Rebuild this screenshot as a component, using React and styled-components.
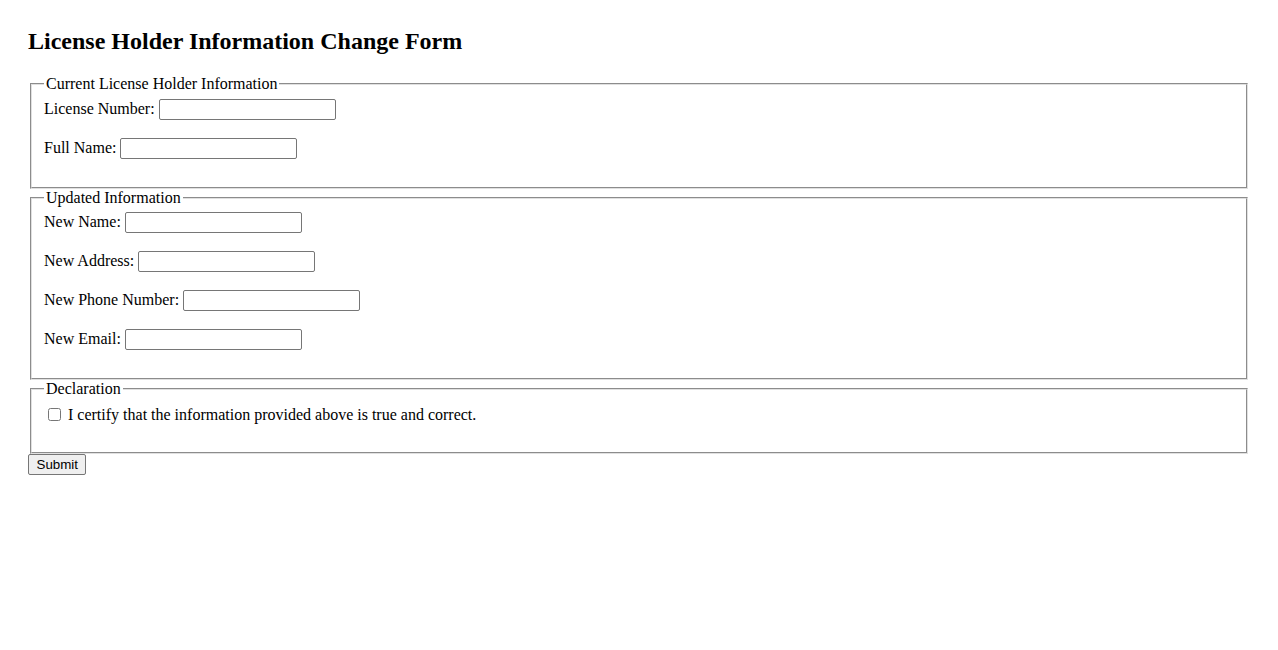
import styled, { createGlobalStyle } from 'styled-components';

const GlobalStyle = createGlobalStyle`
  body {
    margin: 0;
    background: #fff;
    color: #000;
    font-family: "Liberation Serif", "Times New Roman", serif;
    font-size: 16px;
  }
`;

const Page = styled.div`
  padding: 28px;
`;

const Title = styled.h2`
  margin: 0 0 20px;
  font-size: 24px;
  font-weight: bold;
`;

const Fieldset = styled.fieldset`
  margin: 0 2px;
  padding: 0.35em 0.75em 0.625em;
  border: 2px groove #e0e0e0;
`;

const Legend = styled.legend`
  padding: 0 2px;
`;

const Row = styled.div`
  margin-bottom: 18px;
`;

const TextInput = styled.input`
  box-sizing: border-box;
  width: 177px;
  height: 21px;
  margin: 0 0 0 4px;
  padding: 1px 2px;
  border: 1px solid #767676;
  border-radius: 2px;
  font-family: "Liberation Sans", Arial, sans-serif;
  font-size: 13.33px;
  vertical-align: baseline;
`;

const CheckRow = styled.div`
  padding-top: 1px;
  margin-bottom: 18px;
`;

const Checkbox = styled.input`
  width: 13px;
  height: 13px;
  margin: 3px 3px 3px 4px;
  vertical-align: -1px;
`;

const SubmitButton = styled.button`
  display: block;
  height: 21px;
  padding: 1px 7.5px;
  border: 1px solid #767676;
  border-radius: 2px;
  background: #efefef;
  font-family: "Liberation Sans", Arial, sans-serif;
  font-size: 13.33px;
  color: #000;
`;

const fields = [
  {
    legend: 'Current License Holder Information',
    items: ['License Number:', 'Full Name:'],
  },
  {
    legend: 'Updated Information',
    items: ['New Name:', 'New Address:', 'New Phone Number:', 'New Email:'],
  },
];

const App = () => (
  <Page>
    <GlobalStyle />
    <Title>License Holder Information Change Form</Title>
    <form onSubmit={(e) => e.preventDefault()}>
      {fields.map((group) => (
        <Fieldset key={group.legend}>
          <Legend>{group.legend}</Legend>
          {group.items.map((label) => (
            <Row key={label}>
              <label>
                {label}
                <TextInput type="text" />
              </label>
            </Row>
          ))}
        </Fieldset>
      ))}
      <Fieldset>
        <Legend>Declaration</Legend>
        <CheckRow>
          <label>
            <Checkbox type="checkbox" />{' '}
            I certify that the information provided above is true and correct.
          </label>
        </CheckRow>
      </Fieldset>
      <SubmitButton type="submit">Submit</SubmitButton>
    </form>
  </Page>
);

export default App;
